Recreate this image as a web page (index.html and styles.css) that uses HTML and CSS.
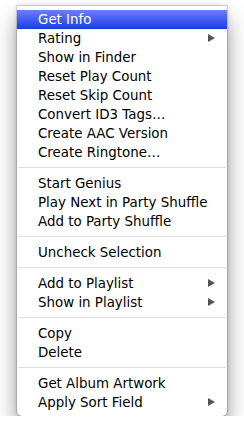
FILE: index.html
```html
<!DOCTYPE html>
<html lang="en">
<head>
  <meta charset="UTF-8">
  <title>Context Menu</title>
  <link rel="stylesheet" href="styles.css">
</head>
<body>
  <ul class="menu">
    <li class="item active">Get Info</li>
    <li class="item sub">Rating</li>
    <li class="item">Show in Finder</li>
    <li class="item">Reset Play Count</li>
    <li class="item">Reset Skip Count</li>
    <li class="item">Convert ID3 Tags…</li>
    <li class="item">Create AAC Version</li>
    <li class="item">Create Ringtone…</li>
    <li class="sep"></li>
    <li class="item">Start Genius</li>
    <li class="item">Play Next in Party Shuffle</li>
    <li class="item">Add to Party Shuffle</li>
    <li class="sep"></li>
    <li class="item">Uncheck Selection</li>
    <li class="sep"></li>
    <li class="item sub">Add to Playlist</li>
    <li class="item sub">Show in Playlist</li>
    <li class="sep"></li>
    <li class="item">Copy</li>
    <li class="item">Delete</li>
    <li class="sep"></li>
    <li class="item">Get Album Artwork</li>
    <li class="item sub">Apply Sort Field</li>
  </ul>
</body>
</html>
```

FILE: styles.css
```css
body {
  margin: 0;
  background: #fff;
  font-family: "Lucida Grande", "DejaVu Sans", sans-serif;
}
.menu {
  list-style: none;
  margin: 6px 0 0 17px;
  padding: 4px 0;
  width: 210px;
  background: #fff;
  border-radius: 0 0 5px 5px;
  box-shadow: 0 0 0 1px rgba(0, 0, 0, 0.12), 0 0 4px rgba(0, 0, 0, 0.15), 0 12px 22px rgba(0, 0, 0, 0.42);
}
.item {
  position: relative;
  height: 19px;
  line-height: 20px;
  padding-left: 21px;
  font-size: 13.4px;
  color: #000;
  white-space: nowrap;
}
.item.active {
  color: #fff;
  background: linear-gradient(#6a80f6, #1c3ce9);
}
.item.sub::after {
  content: "";
  position: absolute;
  right: 12px;
  top: 5px;
  border-left: 7px solid #555;
  border-top: 4px solid transparent;
  border-bottom: 4px solid transparent;
}
.sep {
  height: 1px;
  margin: 5px 1px 6px;
  background: #dedede;
}
```
